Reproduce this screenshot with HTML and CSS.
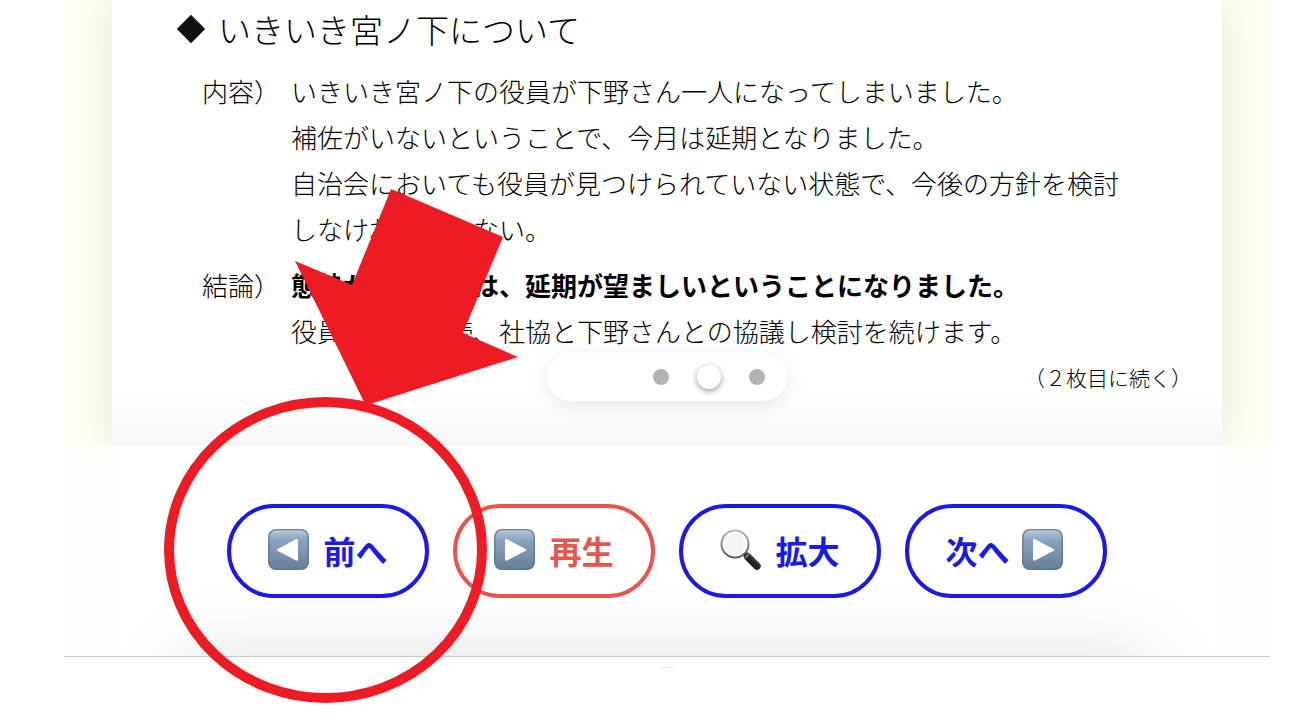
FILE: index.html
```
<!DOCTYPE html>
<html lang="ja">
<head>
<meta charset="utf-8">
<meta name="viewport" content="width=device-width, initial-scale=1">
<title>いきいき宮ノ下について</title>
<link rel="stylesheet" href="styles.css">
</head>
<body>
<svg class="defs" aria-hidden="true">
  <defs>
    <linearGradient id="key" x1="0" y1="0" x2="0" y2="1">
      <stop offset="0" stop-color="#c3d1df"/>
      <stop offset=".12" stop-color="#9fb6cc"/>
      <stop offset=".3" stop-color="#86a1bf"/>
      <stop offset="1" stop-color="#687f98"/>
    </linearGradient>
    <linearGradient id="rim" x1="0" y1="0" x2="0" y2="1">
      <stop offset="0" stop-color="#778797"/>
      <stop offset="1" stop-color="#5f758d"/>
    </linearGradient>
    <linearGradient id="ring" x1="0" y1="0" x2="0" y2="1">
      <stop offset="0" stop-color="#a9bac5"/>
      <stop offset="1" stop-color="#555a5e"/>
    </linearGradient>
    <linearGradient id="grip" x1="0" y1="1" x2="1" y2="0">
      <stop offset="0" stop-color="#111"/>
      <stop offset=".6" stop-color="#292929"/>
      <stop offset="1" stop-color="#777"/>
    </linearGradient>
  </defs>
</svg>
<div class="page">
  <main class="viewer">
    <section class="stage">
      <article class="paper">
        <h1 class="title"><span class="mark"></span>いきいき宮ノ下について</h1>
        <dl class="minutes">
          <dt>内容）</dt>
          <dd>いきいき宮ノ下の役員が下野さん一人になってしまいました。<br>補佐がいないということで、今月は延期となりました。<br>自治会においても役員が見つけられていない状態で、今後の方針を検討<br>しなければならない。</dd>
          <dt>結論）</dt>
          <dd><strong>態勢が整うまでは、延期が望ましいということになりました。</strong><br>役員選任は継続、社協と下野さんとの協議し検討を続けます。</dd>
        </dl>
        <p class="continued">（２枚目に続く）</p>
      </article>
      <nav class="pager" aria-label="ページ">
        <button class="dot" type="button" aria-label="1枚目"></button>
        <button class="dot current" type="button" aria-label="2枚目"></button>
        <button class="dot" type="button" aria-label="3枚目"></button>
      </nav>
    </section>
    <section class="controls">
      <button class="control" type="button">
        <svg class="icon" viewBox="0 0 41 41" aria-hidden="true"><rect x=".8" y=".8" width="39.400" height="39.400" rx="7" fill="url(#key)" stroke="url(#rim)" stroke-width="1.600"/><path d="M10 19.8 28 10.2Q30 9.2 30 11.5V30Q30 32.5 28 31.5L10 22Q8 21 10 19.8Z" fill="#fff"/></svg>
        前へ
      </button>
      <button class="control play" type="button">
        <svg class="icon" viewBox="0 0 41 41" aria-hidden="true"><rect x=".8" y=".8" width="39.400" height="39.400" rx="7" fill="url(#key)" stroke="url(#rim)" stroke-width="1.600"/><path d="M31 19.8 13 10.2Q11 9.2 11 11.5V30Q11 32.5 13 31.5L31 22Q33 21 31 19.8Z" fill="#fff"/></svg>
        再生
      </button>
      <button class="control" type="button">
        <svg class="icon" viewBox="0 0 41 41" aria-hidden="true"><path d="M23.500 23.500 28 28" stroke="#666" stroke-width="4"/><path d="M27.500 27.500 37 37" stroke="url(#grip)" stroke-width="7.500" stroke-linecap="round"/><path d="m25 29 4-4" stroke="#777" stroke-width="2"/><circle cx="15" cy="15" r="13.500" fill="#f3f4f5" stroke="url(#ring)" stroke-width="2"/><circle cx="15" cy="15" r="11.500" fill="none" stroke="#fff" stroke-width="1.500"/></svg>
        拡大
      </button>
      <button class="control next" type="button">
        次へ
        <svg class="icon" viewBox="0 0 41 41" aria-hidden="true"><rect x=".8" y=".8" width="39.400" height="39.400" rx="7" fill="url(#key)" stroke="url(#rim)" stroke-width="1.600"/><path d="M31 19.8 13 10.2Q11 9.2 11 11.5V30Q11 32.5 13 31.5L31 22Q33 21 31 19.8Z" fill="#fff"/></svg>
      </button>
    </section>
    <div class="handle"></div>
  </main>
  <svg class="callout" viewBox="164 189 356 516" aria-hidden="true">
    <path d="M391 189 503 237 463 333 518 357 370 404H365L295 261 352 285Z" fill="#ed1c24"/>
    <ellipse cx="325.500" cy="550" rx="156.500" ry="148" fill="none" stroke="#ed1c24" stroke-width="10"/>
  </svg>
</div>
</body>
</html>
```
FILE: styles.css
```
* {
  box-sizing: border-box;
}

body {
  margin: 0;
  background: #fff;
  color: #000;
  font-family: "Noto Sans CJK JP", sans-serif;
}

.defs {
  position: absolute;
  width: 0;
  height: 0;
}

.page {
  position: relative;
  min-height: 100vh;
  padding: 0 39px 0 64px;
}

.stage {
  position: relative;
  overflow: hidden;
  padding: 0 48px;
  background: #fffef0;
}

.paper {
  padding: 5px 30px 46px 64px;
  background: linear-gradient(#fff calc(100% - 52px), #f6f6f6);
  box-shadow: 0 0 40px rgba(0, 0, 0, 0.1);
}

.title {
  display: flex;
  align-items: center;
  gap: 12px;
  margin: 0 0 15px;
  font-size: 33px;
  font-weight: 300;
  line-height: 48px;
}

.mark {
  width: 20px;
  height: 20px;
  margin: 0 5px;
  background: #111;
  transform: rotate(45deg);
}

.minutes {
  display: grid;
  grid-template-columns: 89px 1fr;
  row-gap: 10px;
  margin: 0 0 0 26px;
  font-size: 26px;
  font-weight: 300;
  line-height: 46px;
}

.minutes dd {
  margin: 0;
  white-space: nowrap;
}

.minutes strong {
  font-weight: 700;
}

.continued {
  margin: 0;
  font-size: 21px;
  font-weight: 300;
  line-height: 46px;
  text-align: right;
}

.pager {
  position: absolute;
  bottom: 45px;
  left: 50%;
  display: flex;
  justify-content: flex-end;
  width: 240px;
  margin-left: -120px;
  padding-right: 6px;
  border-radius: 24px;
  background: #fff;
  box-shadow: 0 4px 20px rgba(0, 0, 0, 0.1);
}

.dot {
  display: grid;
  place-items: center;
  width: 48px;
  height: 48px;
  padding: 0;
  border: 0;
  background: none;
}

.dot::before {
  content: "";
  width: 16px;
  height: 16px;
  border-radius: 50%;
  background: #b3b3b3;
}

.dot.current::before {
  width: 24px;
  height: 24px;
  background: #fff;
  box-shadow: 0 2px 6px rgba(0, 0, 0, 0.4);
}

.controls {
  position: relative;
  display: flex;
  justify-content: center;
  gap: 24px;
  overflow: hidden;
  padding: 58px 24px;
  border-bottom: 1px solid #c8c8c8;
  background: linear-gradient(90deg, #fffdf7, #fffdf8 48px, #fffffd 50px, #fff 110px, #fff calc(100% - 110px), #fffffd calc(100% - 50px), #fffdf8 calc(100% - 48px), #fffdf7);
}

.controls::after {
  content: "";
  position: absolute;
  top: 100%;
  right: 120px;
  left: 120px;
  height: 100px;
  box-shadow: 0 0 80px rgba(0, 0, 0, 0.13);
}

.control {
  position: relative;
  z-index: 1;
  display: flex;
  align-items: center;
  justify-content: center;
  gap: 14px;
  width: 202px;
  height: 94px;
  padding: 0 0 3px;
  border: 4px solid #1a1ae6;
  border-radius: 47px;
  background: #fff;
  color: #1a1ae6;
  font-family: inherit;
  font-size: 32px;
  font-weight: 700;
  line-height: 48px;
}

.control.play {
  border-color: #e6554f;
  color: #e6554f;
}

.control.next {
  gap: 12px;
  padding-right: 4px;
}

.icon {
  width: 41px;
  height: 41px;
}

.handle {
  width: 16px;
  height: 1px;
  margin: 10px auto 0;
  background: #eee;
}

.callout {
  position: absolute;
  top: 189px;
  left: 164px;
  z-index: 2;
  width: 356px;
  height: 516px;
  pointer-events: none;
}
```
